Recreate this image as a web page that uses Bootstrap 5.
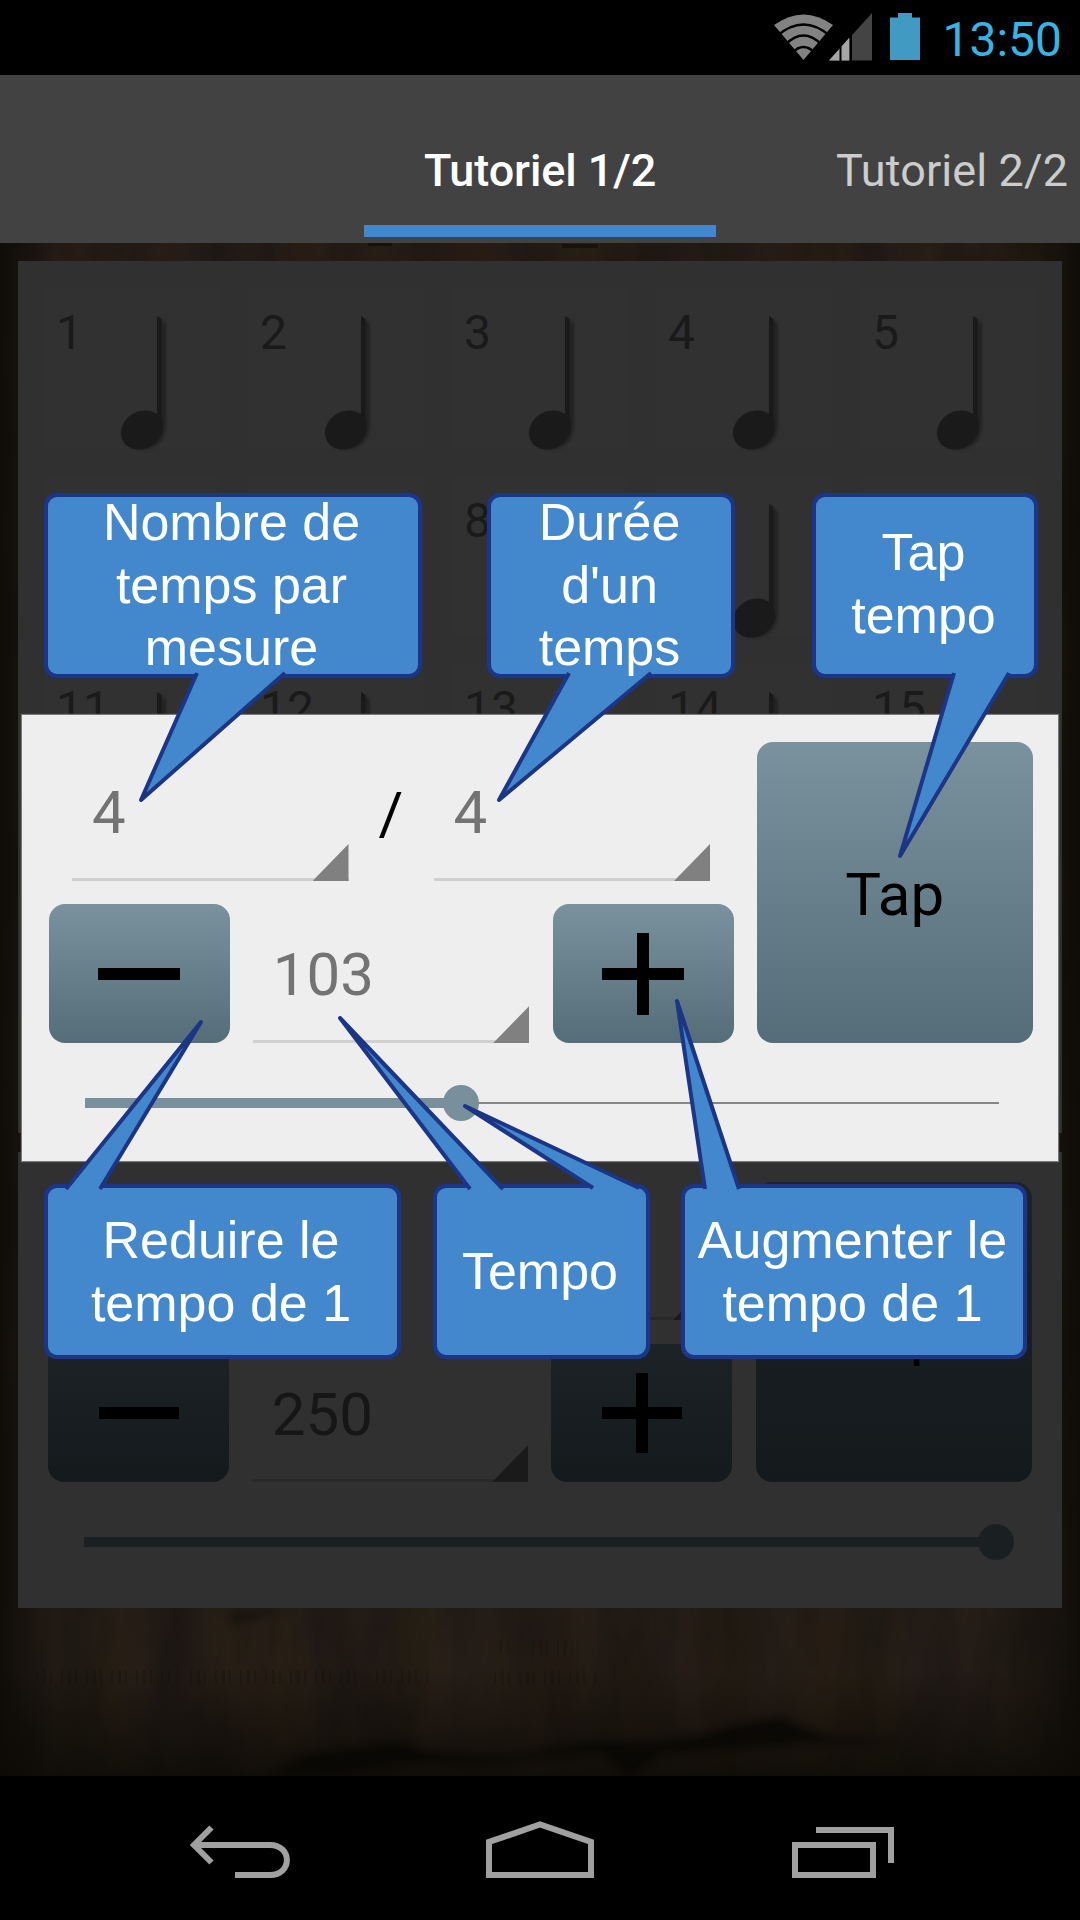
<!DOCTYPE html>
<html lang="fr">
<head>
<meta charset="utf-8">
<meta name="viewport" content="width=device-width, initial-scale=1">
<title>Tutoriel</title>
<link href="https://cdn.jsdelivr.net/npm/bootstrap@5.3.0/dist/css/bootstrap.min.css" rel="stylesheet">
<style>
  body { background: #000; font-family: Roboto, "Liberation Sans", sans-serif; width: 1080px; height: 1920px; overflow: hidden; }
  .phone { width: 1080px; height: 1920px; }
  .status { height: 75px; padding-right: 18px; color: #33b5e5; }
  .clock { font-size: 48px; line-height: 75px; padding-top: 3px; margin-left: 21px; }
  .tabs { height: 168px; background: #424242; font-size: 45px; }
  .tab-on { width: 352px; margin-left: 364px; border-bottom: 12px solid #4388cd; margin-bottom: 6px; color: #fff; font-weight: 500; letter-spacing: -.1px; padding-top: 41px; }
  .tab-next { margin-left: 120px; color: #ccc; padding-top: 24px; letter-spacing: .1px; }
  .stage { height: 1533px; padding: 18px; background: #1e1912; }
  .wood { inset: 0; width: 1080px; height: 1533px; }
  .pane { background: #303030; }
  .pane-notes { height: 872px; padding: 27px 26px; margin-bottom: 19px; }
  .beats { display: grid; grid-template-columns: repeat(5, 176px); grid-auto-rows: 160px; gap: 28px; }
  .beat { background: #313131; color: #1a1a1a; font-size: 48px; line-height: 58px; padding: 16px 0 0 12px; }
  .beat svg { left: 74px; top: 24px; }
  .panel-lower { height: 456px; }
  .metro { --h: 138px; --g: 24px; --side: 684px; --tapw: 276px; --ink: #000; --val: #161616; --line: #292929; --tri: #1a1a1a; --knob: #1a2022; --face: linear-gradient(#1c2326, #141a1c); --rest: #222; padding: 30px; }
  .metro-live { --h: 139px; --g: 23px; --side: 686px; --tapw: 277.5px; --val: #737373; --line: #d0d0d0; --tri: #808080; --knob: #78909c; --face: linear-gradient(#7a929d, #546d79); --rest: #868686; left: 22px; top: 715px; width: 1036px; height: 446px; padding: 27px 25px 26px 26.5px; background: #eee; box-shadow: 0 0 1px 1px #777; }
  .side { width: var(--side); row-gap: var(--g); margin-right: var(--g); }
  .line { height: var(--h); }
  .spin { width: 276.5px; height: var(--h); line-height: 141px; font-size: 60px; color: var(--val); padding-left: 20px; border-bottom: 3px solid var(--line); }
  .spin::after { content: ""; position: absolute; right: 0; bottom: -3px; width: 36px; height: 37px; background: var(--tri); clip-path: polygon(100% 0, 100% 100%, 0 100%); }
  .slash { width: 85px; line-height: 143px; font-size: 60px; color: var(--ink); }
  .key { background: var(--face); border: 0; border-radius: 16px; color: var(--ink); padding: 0; }
  .key-sq { width: 181px; height: var(--h); }
  .key-tap { width: var(--tapw); font-size: 60px; line-height: 1; padding-top: 4px; }
  .metro-live .side { width: 687.5px; }
  .seek { height: 36px; margin: 42px 0 0 36px; width: 912px; }
  .metro-live .seek { width: 914px; }
  .seek::before { content: ""; position: absolute; left: 0; right: 0; top: 17px; height: 2px; background: var(--rest); }
  .seek-fill { position: absolute; left: 0; top: 13px; height: 10px; background: var(--knob); }
  .seek-fill::after { content: ""; position: absolute; right: -18px; top: -13px; width: 36px; height: 36px; border-radius: 50%; background: var(--knob); }
  .tip { z-index: 5; border: 4px solid #1c3585; border-radius: 13px; background: #4388cd; color: #fff; font: 52px/62.7px "Liberation Sans", Arial, sans-serif; text-align: center; box-shadow: 0 0 1px 0 #1c3585; white-space: nowrap; padding-right: 3px; }
  .tip svg { position: absolute; left: -4px; top: -4px; width: 10px; height: 10px; overflow: visible; z-index: -1; fill: #4388cd; stroke: #1c3585; stroke-width: 4; stroke-linejoin: round; }
  .tip-up { top: 493px; height: 185px; padding-bottom: 1px; }
  .tip-tap { padding-bottom: 4px; }
  .tip-down { top: 1184px; height: 175px; }
  .navkeys { height: 144px; }
  .navkeys svg { fill: none; stroke: #a0a0a0; stroke-width: 6; }
</style>
<script src="https://cdn.jsdelivr.net/npm/bootstrap@5.3.0/dist/js/bootstrap.bundle.min.js"></script>
</head>
<body>
<div class="phone position-relative overflow-hidden">

  <header class="status d-flex align-items-center justify-content-end">
    <svg width="150" height="75" viewBox="772 0 150 75">
      <defs><clipPath id="fan"><path d="M804.500 60.500L773 24Q804.500 3 836 24Z"/></clipPath></defs>
      <path d="M804.500 60L775 25Q804.500 4 834 25Z" fill="#828282"/>
      <g clip-path="url(#fan)" fill="none" stroke="#000" stroke-width="2.500">
        <path d="M778 36Q804.500 13 831 36M786 45Q804.500 26 823 45M793 53Q804.500 41 816 53"/>
      </g>
      <path d="M873 13V60.500H830Z" fill="#444"/>
      <path d="M850 38V60.500H830Z" fill="#a5a5a5"/>
      <path d="M841.500 44V61M852 34V61" stroke="#000" stroke-width="2"/>
      <path d="M891 17.500H899V13H913V17.500H921V60H891Z" fill="#419ac1"/>
    </svg>
    <span class="clock">13:50</span>
  </header>

  <nav class="tabs d-flex text-nowrap">
    <div class="tab-on d-flex align-items-center justify-content-center">Tutoriel 1/2</div>
    <div class="tab-next d-flex align-items-center">Tutoriel 2/2</div>
  </nav>

  <main class="stage position-relative">
    <svg class="wood position-absolute" viewBox="0 243 1080 1533" preserveAspectRatio="none">
      <defs>
        <filter id="grain" x="0" y="0" width="100%" height="100%" color-interpolation-filters="sRGB">
          <feTurbulence type="fractalNoise" baseFrequency=".02 .005" numOctaves="4" seed="4"/>
          <feColorMatrix values=".12 0 0 0 .075  .08 .03 0 0 .05  .03 0 .05 0 .04  0 0 0 0 1"/>
        </filter>
        <filter id="soft" color-interpolation-filters="sRGB"><feGaussianBlur stdDeviation="4"/></filter>
        <linearGradient id="edge"><stop offset="0" stop-color="#0c0a05"/><stop offset=".05" stop-color="#0c0a05" stop-opacity="0"/><stop offset=".93" stop-color="#0c0a05" stop-opacity="0"/><stop offset="1" stop-color="#0c0a05"/></linearGradient>
        <linearGradient id="foot" x2="0" y2="1"><stop offset="0" stop-color="#0b0904" stop-opacity="0"/><stop offset="1" stop-color="#0b0904" stop-opacity=".75"/></linearGradient>
      </defs>
      <rect y="243" width="1080" height="1533" fill="#231c15"/>
      <rect y="243" width="1080" height="1533" filter="url(#grain)" opacity=".6"/>
      <rect y="243" width="1080" height="1533" fill="url(#edge)" opacity=".85"/>
      <rect y="1670" width="1080" height="106" fill="url(#foot)"/>
      <g filter="url(#soft)" fill="#080704" opacity=".8">
        <path d="M270 1776L300 1757L350 1748L400 1744L430 1752L500 1758L590 1742L650 1742L700 1736L740 1724L780 1718L830 1738L900 1742L800 1743L660 1754L630 1776L600 1752L480 1764L400 1763L330 1776Z"/>
        <path d="M228 1616L290 1608L235 1622Z" opacity=".8"/>
      </g>
      <path d="M36 1677H170M190 1677H360M376 1677H430M494 1678H598M500 1646H508M532 1648H572" stroke="#130e09" stroke-width="14" stroke-dasharray="2 5 3 4 2 9" opacity=".25"/>
      <path d="M368 244H392M562 246H598" stroke="#120e09" stroke-width="4" opacity=".7"/>
    </svg>

    <section class="pane pane-notes position-relative overflow-hidden">
      <div class="beats" id="beats"></div>
    </section>

    <section class="pane panel-lower position-relative">
      <div class="metro">
        <div class="d-flex">
          <div class="side d-flex flex-column">
            <div class="line d-flex justify-content-center"><div class="spin position-relative"></div><div class="slash text-center"></div><div class="spin position-relative"></div></div>
            <div class="line d-flex justify-content-between">
              <button class="key key-sq d-flex align-items-center justify-content-center" aria-label="moins"><svg width="82" height="82" viewBox="0 0 82 82"><path d="M1 41H81" stroke="#000" stroke-width="12"/></svg></button>
              <div class="spin position-relative">250</div>
              <button class="key key-sq d-flex align-items-center justify-content-center" aria-label="plus"><svg width="82" height="82" viewBox="0 0 82 82"><path d="M1 41H81M41 1V81" stroke="#000" stroke-width="12"/></svg></button>
            </div>
          </div>
          <button class="key key-tap">Tap</button>
        </div>
        <div class="seek position-relative"><div class="seek-fill" style="width:100%"></div></div>
      </div>
    </section>
  </main>

  <footer class="navkeys d-flex">
    <svg width="1080" height="144" viewBox="0 1776 1080 144">
      <path d="M211.500 1827.500L194 1845L211.500 1862.500M194 1845H270C292.500 1845 292.500 1875 270 1875H235"/>
      <path d="M489 1875V1842L540 1824.500L591 1842V1875Z"/>
      <path d="M795 1845H873V1875H795ZM816 1830H891V1863"/>
    </svg>
  </footer>

  <section class="metro metro-live position-absolute">
    <div class="d-flex">
      <div class="side d-flex flex-column">
        <div class="line d-flex justify-content-center"><div class="spin position-relative">4</div><div class="slash text-center">/</div><div class="spin position-relative">4</div></div>
        <div class="line d-flex justify-content-between">
          <button class="key key-sq d-flex align-items-center justify-content-center" aria-label="moins"><svg width="82" height="82" viewBox="0 0 82 82"><path d="M0 41H82" stroke="#000" stroke-width="12"/></svg></button>
          <div class="spin position-relative">103</div>
          <button class="key key-sq d-flex align-items-center justify-content-center" aria-label="plus"><svg width="82" height="82" viewBox="0 0 82 82"><path d="M0 41H82M41 0V82" stroke="#000" stroke-width="12"/></svg></button>
        </div>
      </div>
      <button class="key key-tap">Tap</button>
    </div>
    <div class="seek position-relative"><div class="seek-fill" style="width:41.2%"></div></div>
  </section>

  <div class="tip tip-up position-absolute d-flex align-items-center justify-content-center" style="left:44px;width:378px">
    <svg><path d="M153 180L97 307L241 180"/></svg><span>Nombre de<br>temps par<br>mesure</span>
  </div>
  <div class="tip tip-up position-absolute d-flex align-items-center justify-content-center" style="left:487px;width:248px">
    <svg><path d="M82 180L12 307L164 180"/></svg><span>Durée<br>d'un<br>temps</span>
  </div>
  <div class="tip tip-up tip-tap position-absolute d-flex align-items-center justify-content-center" style="left:812px;width:226px">
    <svg><path d="M142 180L88 363L197 180"/></svg><span>Tap<br>tempo</span>
  </div>
  <div class="tip tip-down position-absolute d-flex align-items-center justify-content-center" style="left:44px;width:357px">
    <svg><path d="M22 5L157 -162L56 5"/></svg><span>Reduire le<br>tempo de 1</span>
  </div>
  <div class="tip tip-down position-absolute d-flex align-items-center justify-content-center" style="left:433px;width:217px">
    <svg><path d="M37 5L-93 -166L70 5M160 4L32 -78L206 4"/></svg><span>Tempo</span>
  </div>
  <div class="tip tip-down position-absolute d-flex align-items-center justify-content-center" style="left:681px;width:346px">
    <svg><path d="M24 5L-4 -183L58 5"/></svg><span>Augmenter le<br>tempo de 1</span>
  </div>
</div>
<script>
  const beats = document.getElementById('beats');
  const labels = ['1', '2', '3', '4', '5', '', '', '8', '', '', '11', '12', '13', '14', '15'];
  for (const label of labels) {
    beats.insertAdjacentHTML('beforeend',
      `<div class="beat position-relative">${label}<svg class="position-absolute" width="56" height="140" viewBox="118 312 56 140">
        <g fill="#222" style="filter:blur(1.5px)"><path d="M159 318L166 324V430H159Z"/><ellipse cx="145" cy="431" rx="21" ry="18" transform="rotate(-28 145 431)"/></g>
        <path d="M157 316L161.500 319V428H157Z" fill="#1a1a1a"/><ellipse cx="142" cy="430" rx="22" ry="18.500" transform="rotate(-32 142 430)" fill="#1a1a1a"/></svg></div>`);
  }
</script>
</body>
</html>
